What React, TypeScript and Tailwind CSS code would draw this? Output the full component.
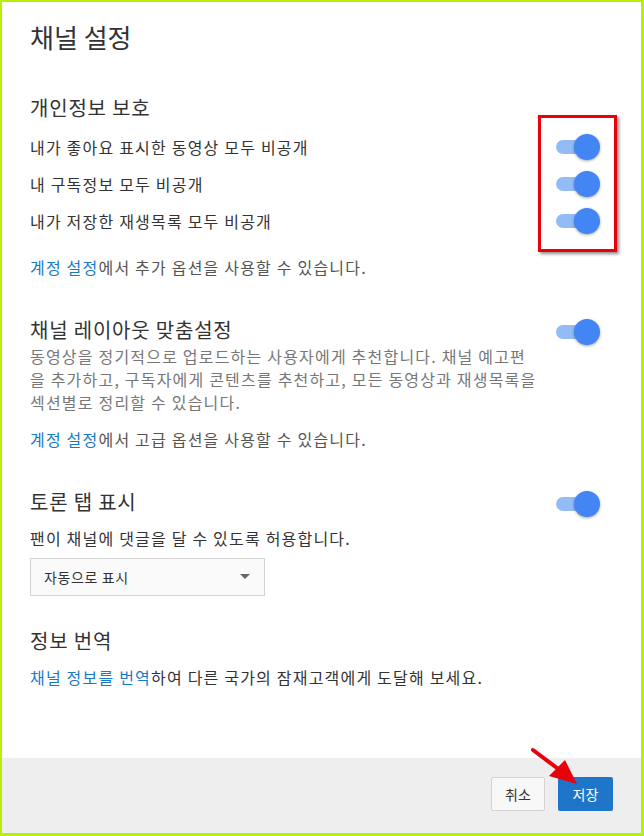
import React from "react";

const font = { fontFamily: '"Noto Sans CJK KR", "Noto Sans", sans-serif' };

function Toggle() {
  return (
    <div className="relative w-[44px] h-[26px] shrink-0">
      <div className="absolute left-0 top-[6px] w-[34px] h-[14px] rounded-full bg-[#93bbf6]" />
      <div className="absolute right-0 top-0 w-[26px] h-[26px] rounded-full bg-[#4285f4] shadow-[0_1px_3px_rgba(0,0,0,0.35)]" />
    </div>
  );
}

function Row({ children }: { children: React.ReactNode }) {
  return (
    <div className="h-[37px] flex items-center justify-between text-[16px] tracking-[1.2px] text-[#333]">
      <span>{children}</span>
      <Toggle />
    </div>
  );
}

export default function App() {
  return (
    <div
      className="w-[644px] h-[836px] bg-white border-l-2 border-t-2 border-r-[3px] border-b-[3px] border-[#b6f200] flex flex-col relative overflow-hidden"
      style={font}
    >
      <div className="flex-1 pl-[28px] pr-[41px]">
        <div className="mt-[19px] h-[32px] leading-[32px] text-[26px] text-[#333]">채널 설정</div>

        <div className="mt-[41px] h-[28px] leading-[28px] text-[20px] tracking-[0.8px] text-[#333]">개인정보 보호</div>
        <div className="mt-[6px]">
          <Row>내가 좋아요 표시한 동영상 모두 비공개</Row>
          <Row>내 구독정보 모두 비공개</Row>
          <Row>내가 저장한 재생목록 모두 비공개</Row>
        </div>
        <div className="mt-[17px] h-[22px] leading-[22px] text-[16px] tracking-[1.2px] text-[#555]">
          <span className="text-[#167ac6]">계정 설정</span>에서 추가 옵션을 사용할 수 있습니다.
        </div>

        <div className="mt-[38px] flex justify-between">
          <div>
            <div className="h-[28px] leading-[28px] text-[20px] tracking-[0.8px] text-[#333]">채널 레이아웃 맞춤설정</div>
            <div className="mt-[1px] text-[16px] tracking-[1.2px] leading-[23px] text-[#777] whitespace-nowrap">
              <div>동영상을 정기적으로 업로드하는 사용자에게 추천합니다. 채널 예고편</div>
              <div>을 추가하고, 구독자에게 콘텐츠를 추천하고, 모든 동영상과 재생목록을</div>
              <div>섹션별로 정리할 수 있습니다.</div>
            </div>
          </div>
          <div className="mt-[3px]">
            <Toggle />
          </div>
        </div>
        <div className="mt-[14px] h-[22px] leading-[22px] text-[16px] tracking-[1.2px] text-[#555]">
          <span className="text-[#167ac6]">계정 설정</span>에서 고급 옵션을 사용할 수 있습니다.
        </div>

        <div className="mt-[38px] flex justify-between items-start">
          <div className="h-[28px] leading-[28px] text-[20px] tracking-[0.8px] text-[#333]">토론 탭 표시</div>
          <div className="mt-[3px]">
            <Toggle />
          </div>
        </div>
        <div className="mt-[10px] h-[22px] leading-[22px] text-[16px] tracking-[1.2px] text-[#333]">
          팬이 채널에 댓글을 달 수 있도록 허용합니다.
        </div>
        <div className="mt-[9px] w-[235px] h-[38px] border border-[#d3d3d3] bg-[#fafafa] flex items-center justify-between pl-[13px] pr-[14px]">
          <span className="text-[14px] tracking-[0.6px] text-[#333]">자동으로 표시</span>
          <svg width="10" height="6" viewBox="0 0 10 6">
            <path d="M0 0 L10 0 L5 5 Z" fill="#666" />
          </svg>
        </div>

        <div className="mt-[31px] h-[28px] leading-[28px] text-[20px] tracking-[0.8px] text-[#333]">정보 번역</div>
        <div className="mt-[11px] h-[22px] leading-[22px] text-[16px] tracking-[1.2px] text-[#333]">
          <span className="text-[#167ac6]">채널 정보를 번역</span>하여 다른 국가의 잠재고객에게 도달해 보세요.
        </div>
      </div>

      <div className="h-[75px] bg-[#eeeeee] flex items-start justify-end gap-[13px] pr-[28px] pt-[19px]">
        <button className="w-[54px] h-[34px] rounded-[2px] border border-[#d3d3d3] bg-[#f8f8f8] text-[14px] text-[#333]">
          취소
        </button>
        <button className="w-[55px] h-[34px] rounded-[2px] bg-[#1f76c8] text-[14px] text-white">
          저장
        </button>
      </div>

      {/* red highlight box */}
      <div className="absolute left-[536px] top-[113px] w-[79px] h-[137px] border-[3px] border-[#e8000b] shadow-[2px_2px_3px_rgba(0,0,0,0.45)]" />

      {/* red arrow */}
      <svg
        className="absolute left-[525px] top-[742px]"
        width="60"
        height="50"
        viewBox="0 0 60 50"
      >
        <line x1="6" y1="6" x2="34" y2="27" stroke="#e8000b" strokeWidth="4" strokeLinecap="round" />
        <path d="M50 40 L22 32 L38 16 Z" fill="#e8000b" />
      </svg>
    </div>
  );
}
